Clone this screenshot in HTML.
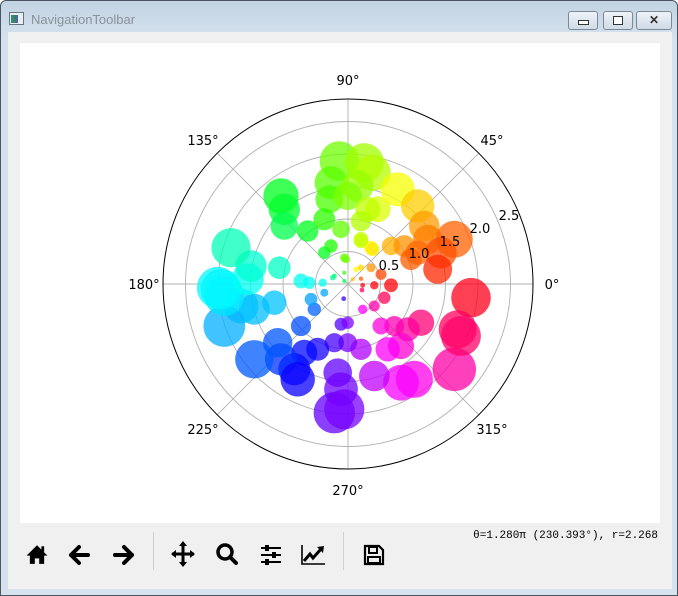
<!DOCTYPE html>
<html><head><meta charset="utf-8"><style>
html,body{margin:0;padding:0;width:678px;height:596px;overflow:hidden;background:#fff}
#win{position:absolute;left:0;top:0;width:676px;height:594px;border:1px solid #4a5560;border-radius:6px 6px 0 0;background:linear-gradient(#c2d3e3,#d6e3ef 40px,#d6e3ef);}
#title{position:absolute;left:30px;top:11px;font:13px "Liberation Sans",sans-serif;color:#8a929a}
#client{position:absolute;left:7px;top:31px;width:664px;height:557px;background:#f0f0f0}
#canvas{position:absolute;left:12px;top:11px;width:640px;height:480px;background:#fff}
.btn{position:absolute;top:10px;height:17px;border:1px solid #7d8894;border-radius:3px;background:linear-gradient(#eef3f8,#cfdbe7)}
.sep{position:absolute;top:19px;width:1px;height:38px;background:#d0d0d0}
#status{position:absolute;right:14px;top:498px;font:11px "Liberation Mono","Noto Sans CJK SC",monospace;color:#000}
</style></head><body>
<div id="win">
 <svg style="position:absolute;left:8px;top:11px" width="16" height="14"><rect x="0.5" y="0.5" width="14" height="12" fill="#e8eef4" stroke="#6a7480"/><rect x="2" y="3" width="4" height="8" fill="#3a8a6a"/><rect x="6" y="3" width="3" height="8" fill="#4a6a9a"/></svg>
 <div id="title">NavigationToolbar</div>
 <div class="btn" style="left:567px;width:28px"><div style="position:absolute;left:9px;top:8px;width:9px;height:3px;border:1px solid #333;background:#fff"></div></div>
 <div class="btn" style="left:602px;width:28px"><div style="position:absolute;left:9px;top:4px;width:8px;height:7px;border:1px solid #333;background:#fff"></div></div>
 <div class="btn" style="left:635px;width:34px;font:bold 12px 'Liberation Sans';text-align:center;line-height:17px;color:#333">✕</div>
 <div id="client">
  <div id="canvas">
   <svg width="640" height="480" viewBox="19 42 640 480" id="plot" font-family="DejaVu Sans, Liberation Sans, sans-serif" font-size="13">
    <g fill="none" stroke="#b0b0b0" stroke-width="0.9">
     <circle cx="347" cy="283" r="32.5"/><circle cx="347" cy="283" r="65"/><circle cx="347" cy="283" r="97.5"/><circle cx="347" cy="283" r="130"/><circle cx="347" cy="283" r="162.5"/>
     <line x1="162" y1="283" x2="532" y2="283"/><line x1="347" y1="98" x2="347" y2="468"/>
     <line x1="216.2" y1="152.2" x2="477.8" y2="413.8"/><line x1="216.2" y1="413.8" x2="477.8" y2="152.2"/>
    </g>
    <g id="dots"></g>
    <circle cx="347" cy="283" r="185" fill="none" stroke="#000" stroke-width="1"/>
    <g fill="#000" text-anchor="middle">
     <text x="551" y="288">0°</text><text x="491" y="144">45°</text><text x="347" y="84">90°</text><text x="202" y="144">135°</text><text x="143" y="288">180°</text><text x="202" y="433">225°</text><text x="347" y="494">270°</text><text x="491" y="433">315°</text>
     <text x="388" y="269">0.5</text><text x="418" y="257">1.0</text><text x="449" y="245">1.5</text><text x="479" y="232">2.0</text><text x="508" y="219">2.5</text>
    </g>
   </svg>
  </div>
  <svg width="22" height="22" viewBox="0 0 20 20" style="position:absolute;left:18px;top:511px"><path d="M10 2 L0.5 11.5 L3.5 11.5 L3.5 19 L8 19 L8 14 L12 14 L12 19 L16.5 19 L16.5 11.5 L19.5 11.5 Z" fill="#000"/><rect x="14" y="3" width="2.5" height="5" fill="#000"/></svg>
  <svg width="24" height="22" style="position:absolute;left:60px;top:512px"><path d="M3 11 L11 3 M3 11 L11 19 M3 11 L20 11" stroke="#000" stroke-width="4" fill="none" stroke-linecap="round" stroke-linejoin="round"/></svg>
  <svg width="24" height="22" style="position:absolute;left:103px;top:512px"><path d="M21 11 L13 3 M21 11 L13 19 M21 11 L4 11" stroke="#000" stroke-width="4" fill="none" stroke-linecap="round" stroke-linejoin="round"/></svg>
  <div class="sep" style="left:145px;top:500px"></div>
  <svg width="24" height="26" style="position:absolute;left:163px;top:509px"><path d="M12 2 L12 24 M1 13 L23 13" stroke="#000" stroke-width="3"/><path d="M12 0 L8 5 L16 5Z M12 26 L8 21 L16 21Z M0 13 L5 9 L5 17Z M24 13 L19 9 L19 17Z" fill="#000"/></svg>
  <svg width="24" height="24" style="position:absolute;left:207px;top:510px"><circle cx="10" cy="10" r="7" fill="none" stroke="#000" stroke-width="3.5"/><path d="M15 15 L21 21" stroke="#000" stroke-width="4" stroke-linecap="round"/></svg>
  <svg width="24" height="24" style="position:absolute;left:251px;top:511px"><path d="M2 5 H22 M2 12 H22 M2 19 H22" stroke="#000" stroke-width="2"/><rect x="6" y="2" width="4" height="6" fill="#000"/><rect x="13" y="9" width="4" height="6" fill="#000"/><rect x="6" y="16" width="4" height="6" fill="#000"/></svg>
  <svg width="26" height="24" style="position:absolute;left:292px;top:511px"><path d="M2 2 V21 H25" stroke="#000" stroke-width="1.6" fill="none"/><path d="M4 18 L10 11 L13 15 L21 6" stroke="#000" stroke-width="3" fill="none"/><path d="M17 4 L24 3 L23 10Z" fill="#000"/></svg>
  <div class="sep" style="left:335px;top:500px"></div>
  <svg width="22" height="22" style="position:absolute;left:355px;top:512px"><path d="M2 2 H16 L20 6 V20 H2 Z" fill="none" stroke="#000" stroke-width="2.2"/><rect x="6" y="3" width="8" height="6" fill="none" stroke="#000" stroke-width="2"/><rect x="5" y="13" width="12" height="6" fill="none" stroke="#000" stroke-width="2"/></svg>
  <div id="status">θ=1.280π (230.393°), r=2.268</div>
 </div>
</div>
<script>
var pts=[[535,195],[610,200],[635,230],[510,260],[590,270],[505,310],[560,300],[650,340],[710,280],[620,340],[600,375],
[770,330],[790,390],[800,430],[690,450],[730,450],[770,470],[600,430],[630,455],[880,430],[840,470],[830,520],[750,490],
[630,515],[660,535],[600,548],[690,568],[640,568],[605,568],[603,582],[930,605],[890,700],[880,820],[900,720],
[780,680],[740,700],[700,690],[660,690],[640,630],[670,605],[605,640],[720,750],[680,760],[760,850],[720,860],[640,840],[600,760],[560,740],
[520,740],[530,830],[540,880],[520,950],[550,940],[540,685],[560,680],[470,760],[430,770],[400,820],[360,790],[410,850],[280,790],[350,740],[420,690],[460,640],[450,610],
[240,630],[280,640],[340,620],[190,690],[190,600],[180,580],[170,575],[260,550],[270,510],[210,455],[355,515],[420,555],[445,560],[485,560],[490,590],[515,545],
[360,300],[370,340],[370,390],[440,405],[490,370],[540,400],[490,470],[510,450],[550,485],[600,435],[635,460],
[555,490],[585,520],[550,530],[520,540],[575,550],[550,555],[548,608],[600,515]];
function hsv(h){h=((h%360)+360)%360;var c=function(n){var k=(n+h/60)%6;return Math.round(255*(1-Math.max(0,Math.min(k,4-k,1))));};return 'rgb('+c(5)+','+c(3)+','+c(1)+')';}
var g=document.getElementById('dots'),s='';
pts.forEach(function(p){var x=p[0]/3+160,y=p[1]/3+95,dx=x-347,dy=283-y,d=Math.sqrt(dx*dx+dy*dy);var a=Math.atan2(dy,dx)*180/Math.PI;var r=Math.max(2,d*0.16);
s+='<circle cx="'+x.toFixed(1)+'" cy="'+y.toFixed(1)+'" r="'+r.toFixed(1)+'" fill="'+hsv(a)+'" fill-opacity="0.75"/>';});
g.innerHTML=s;
</script>
</body></html>
